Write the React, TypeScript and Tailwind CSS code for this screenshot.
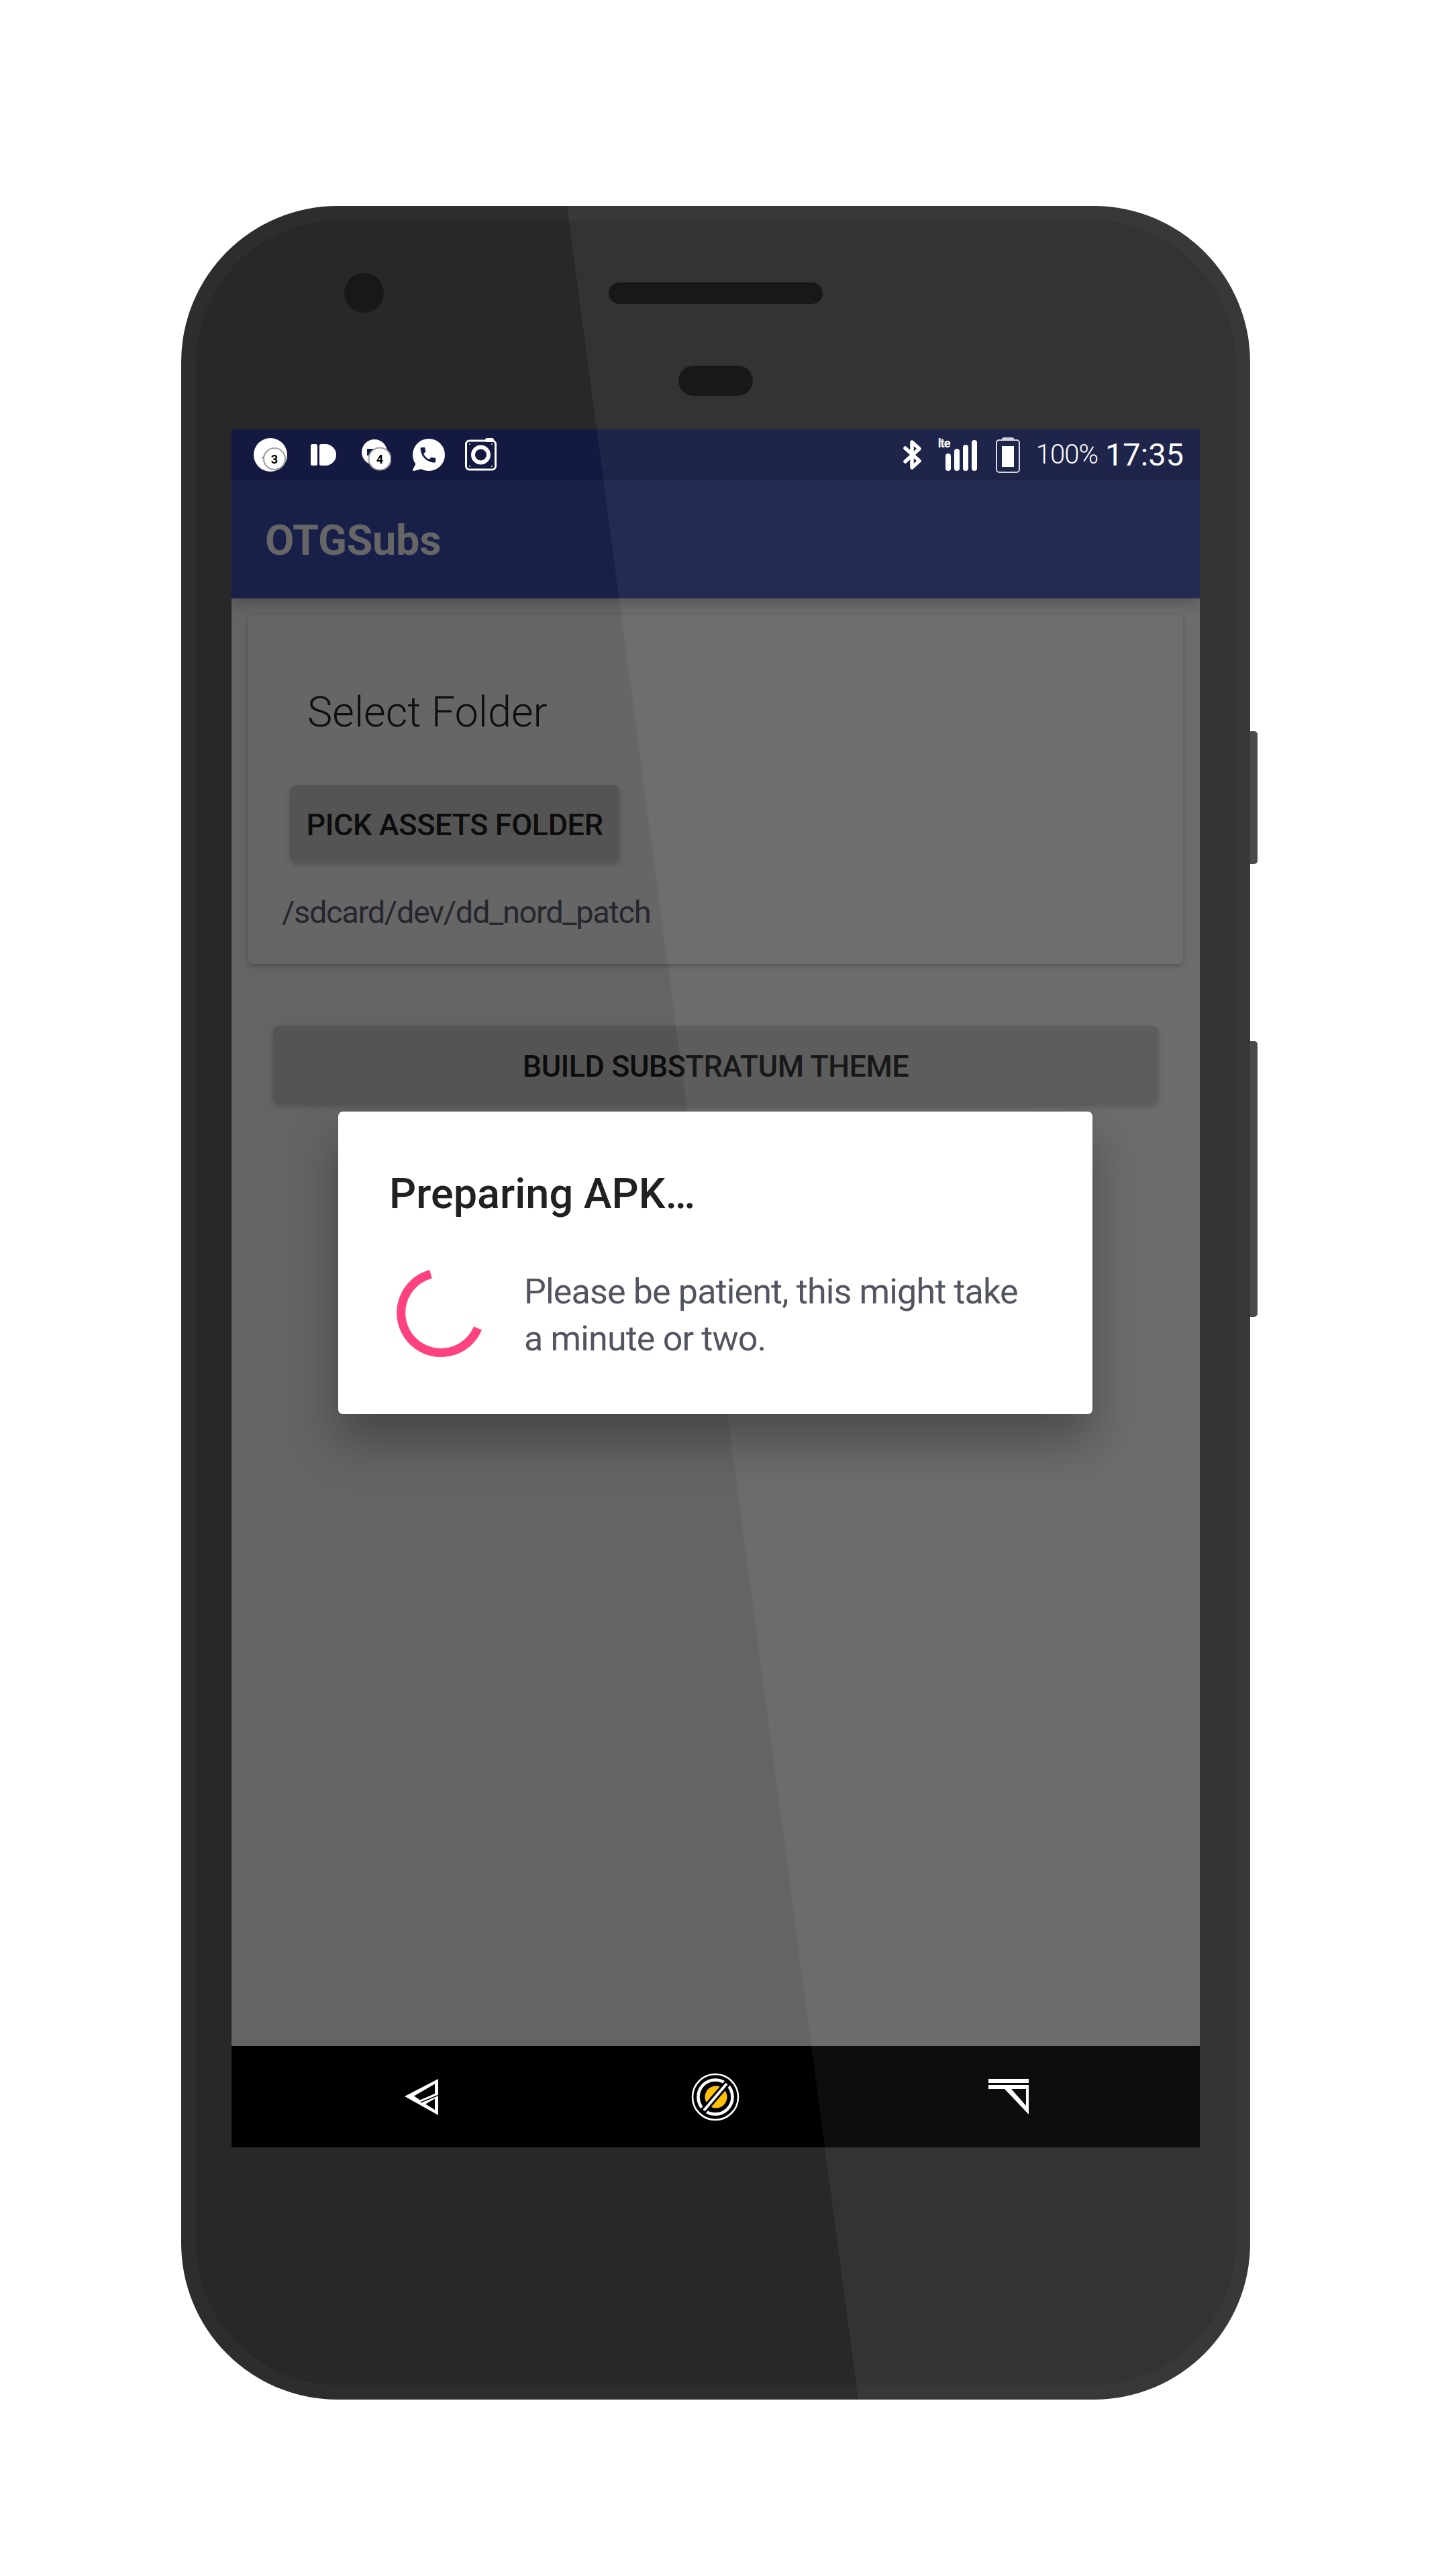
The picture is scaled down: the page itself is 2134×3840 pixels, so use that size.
import React from "react";

const STATUS_BG = "#131940";

function BadgeIcon({ n, w, cx, cy, r, bx, by, br, hole, tail }: { n: string; w: number; cx: number; cy: number; r: number; bx: number; by: number; br: number; hole: string; tail?: string }) {
  return (
    <svg width={w} height={50} viewBox={`0 0 ${w} 50`} className="shrink-0">
      <circle cx={cx} cy={cy} r={r} fill="#fff" />
      {tail && <polygon points={tail} fill="#fff" />}
      <polygon points={hole} fill={STATUS_BG} />
      <circle cx={bx} cy={by} r={br} fill="#fff" stroke="#a3a3a3" strokeWidth={2.2} />
      <text x={bx} y={by + 6.5} textAnchor="middle" fontSize={18} fontWeight={700} fill="#000" fontFamily="Roboto, sans-serif">
        {n}
      </text>
    </svg>
  );
}

function PushIcon() {
  return (
    <svg width={38} height={32} viewBox="0 0 38 32" className="shrink-0">
      <rect x={0} y={0} width={10} height={32} rx={2.5} fill="#fff" />
      <path d="M13 2.5a2.5 2.5 0 0 1 2.5-2.5H22a16 16 0 0 1 0 32h-6.5a2.5 2.5 0 0 1-2.5-2.5z" fill="#fff" />
    </svg>
  );
}

function WhatsIcon() {
  return (
    <svg width={49} height={50} viewBox="0 0 49 50" className="shrink-0">
      <circle cx={25} cy={25} r={24} fill="#fff" />
      <path d="M8 34 L1 47 Q0.5 49 3 49 L18 45 Z" fill="#fff" />
      <g transform="translate(9.5 9.5) scale(1.25)">
        <path
          d="M6.62 10.79c1.44 2.83 3.76 5.14 6.59 6.59l2.2-2.2c.27-.27.67-.36 1.02-.24 1.12.37 2.33.57 3.57.57.55 0 1 .45 1 1V20c0 .55-.45 1-1 1-9.39 0-17-7.61-17-17 0-.55.45-1 1-1h3.5c.55 0 1 .45 1 1 0 1.25.2 2.45.57 3.57.11.35.03.74-.25 1.02l-2.2 2.2z"
          fill={STATUS_BG}
          transform="translate(-0.5 0.5)"
        />
      </g>
    </svg>
  );
}

function InstaIcon() {
  return (
    <svg width={47} height={50} viewBox="0 0 47 50" className="shrink-0">
      <rect x={1.5} y={4} width={44} height={43} rx={5} fill="none" stroke="#fff" strokeWidth={3} />
      <rect x={30} y={0} width={13} height={6} rx={3} fill="#fff" />
      <circle cx={23.5} cy={25} r={11.5} fill="none" stroke="#fff" strokeWidth={6} />
      <circle cx={7} cy={9} r={0.9} fill="#fff" />
      <circle cx={40} cy={9} r={0.9} fill="#fff" />
      <circle cx={7} cy={42} r={0.9} fill="#fff" />
      <circle cx={40} cy={42} r={0.9} fill="#fff" />
    </svg>
  );
}

function Bluetooth() {
  return (
    <svg width={28} height={44} viewBox="0 0 28 44" className="shrink-0">
      <path
        d="M3 12 L24 31 L13 41 V3 L24 13 L3 32"
        fill="none"
        stroke="#fff"
        strokeWidth={5.5}
        strokeLinecap="round"
        strokeLinejoin="round"
      />
    </svg>
  );
}

function Signal() {
  return (
    <div className="relative flex h-[47px] w-[59px] shrink-0 items-end gap-[5px] pl-[11px]">
      <span className="absolute left-0 top-[-4px] font-['Roboto'] text-[18px] leading-[20px] font-bold tracking-[-1px] text-white">lte</span>
      <div className="h-[26px] w-[8px] rounded-full bg-white" />
      <div className="h-[33px] w-[8px] rounded-full bg-white" />
      <div className="h-[39px] w-[8px] rounded-full bg-white" />
      <div className="h-[46px] w-[8px] rounded-full bg-white" />
    </div>
  );
}

function Battery() {
  return (
    <svg width={36} height={53} viewBox="0 0 36 53" className="shrink-0">
      <rect x={9} y={0} width={18} height={5} rx={2.5} fill="#c9cbd6" />
      <rect x={1} y={4} width={34} height={48} rx={4} fill="none" stroke="#d8d9e0" strokeWidth={2} />
      <rect x={9} y={13} width={18} height={31} fill="#fff" />
    </svg>
  );
}

function BackIcon() {
  return (
    <svg width={50} height={54} viewBox="13 18 50 54">
      <path
        fillRule="evenodd"
        d="M13 44 L63 18 V72 Z M27 43.5 L36 49.5 L58 40 V25.5 Z M44 55.5 L58 64 V47.5 Z"
        fill="#fff"
      />
      <path d="M37 53 L63 42.5" stroke="#000" strokeWidth={1.6} />
    </svg>
  );
}

function HomeIcon() {
  return (
    <svg width={72} height={72} viewBox="0 0 72 72">
      <circle cx={36} cy={36} r={34} fill="none" stroke="#fff" strokeWidth={2.6} />
      <circle cx={36} cy={36} r={25.5} fill="none" stroke="#fff" strokeWidth={4.6} />
      <circle cx={37} cy={36} r={16.5} fill="#ffc107" />
      <path d="M17 58 L55 14" stroke="#000" strokeWidth={10} />
      <path d="M19 56 L53 16" stroke="#fff" strokeWidth={4} />
    </svg>
  );
}

function RecentsIcon() {
  return (
    <svg width={60} height={53} viewBox="0 0 60 53">
      <rect x={0} y={0} width={60} height={6} fill="#fff" />
      <rect x={0} y={9} width={60} height={6} fill="#fff" />
      <path fillRule="evenodd" d="M24 15 H60 V53 Z M34 15 L56 40 V15 Z" fill="#fff" />
    </svg>
  );
}

function Spinner() {
  return (
    <svg width={132} height={132} viewBox="0 0 132 132" className="shrink-0">
      <path d="M51 8.4 A59.5 59.5 0 1 0 121 89" fill="none" stroke="#ff4081" strokeWidth={13} />
    </svg>
  );
}

export default function App() {
  return (
    <div className="relative h-[3840px] w-[2134px] overflow-hidden bg-white pl-[270px] pt-[307px] font-['Roboto',sans-serif]">
      {/* side buttons */}
      <div className="absolute left-[1863px] top-[1090px] h-[198px] w-[11px] rounded-r-[5px] bg-[#4a4a4a]" />
      <div className="absolute left-[1863px] top-[1552px] h-[411px] w-[11px] rounded-r-[5px] bg-[#4a4a4a]" />

      {/* phone */}
      <div className="relative h-[3270px] w-[1593px] overflow-hidden rounded-[233px] bg-[#2d2d2d] p-[22px]">
        <div className="flex h-full flex-col rounded-[212px] bg-[#282828] px-[53px]">
          {/* top bezel */}
          <div className="relative flex h-[311px] shrink-0 flex-col items-center">
            <div className="absolute left-[168px] top-[78px] h-[59px] w-[59px] rounded-full bg-[#181818]" />
            <div className="relative z-20 mt-[92px] h-[32px] w-[319px] rounded-full bg-[#181818]" />
            <div className="relative z-20 mt-[92px] h-[45px] w-[111px] rounded-full bg-[#181818]" />
          </div>

          {/* screen */}
          <div className="relative flex h-[2561px] shrink-0 flex-col overflow-hidden">
            <div className="flex h-[76px] shrink-0 items-center justify-between pl-[33px] pr-[24px]" style={{ background: STATUS_BG }}>
              <div className="flex items-center">
                <BadgeIcon n="3" w={50} cx={25} cy={25} r={25} bx={31} by={31} br={16} hole="12,30 20,22 21,32" />
                <div className="ml-[35px]"><PushIcon /></div>
                <div className="ml-[38px]">
                  <BadgeIcon n="4" w={44} cx={19} cy={21} r={19} bx={27} by={31} br={16.5} hole="8,16 19,16 17,26 8,26" tail="19,40 27,40 22,48" />
                </div>
                <div className="ml-[31px]"><WhatsIcon /></div>
                <div className="ml-[30px]"><InstaIcon /></div>
              </div>
              <div className="flex items-center text-white">
                <Bluetooth />
                <div className="ml-[24px]"><Signal /></div>
                <div className="ml-[27px]"><Battery /></div>
                <span className="ml-[24px] text-[40px] leading-[50px] font-light tracking-[-1px]">100%</span>
                <span className="ml-[11px] text-[47px] leading-[50px]">17:35</span>
              </div>
            </div>

            <div className="z-[1] flex h-[176px] shrink-0 items-center bg-[#182049] pl-[50px] pt-[4px] shadow-[0_6px_20px_rgba(0,0,0,0.25)]">
              <span className="text-[63px] leading-[72px] font-bold tracking-[-0.3px] text-[#666666]">OTGSubs</span>
            </div>

            <div className="flex min-h-0 flex-1 flex-col bg-[#646464] px-[25px] pt-[25px]">
              <div className="flex h-[520px] shrink-0 flex-col items-start rounded-[7px] bg-[#666666] shadow-[0_3px_7px_rgba(0,0,0,0.22)]">
                <div className="ml-[88px] mt-[108px] text-[63px] leading-[74px] font-light text-[#0e0e0e]">Select Folder</div>
                <div className="ml-[62px] mt-[71px] flex h-[115px] w-[491px] items-center justify-center rounded-[10px] bg-[#545454] pt-[5px] text-[45px] font-medium tracking-[-0.4px] text-[#0c0c0c] shadow-[0_4px_8px_rgba(0,0,0,0.2)]">
                  PICK ASSETS FOLDER
                </div>
                <div className="ml-[50px] mt-[46px] text-[47px] leading-[58px] tracking-[-1.35px] text-[#25272d]">/sdcard/dev/dd_nord_patch</div>
              </div>
              <div className="mx-[37px] mt-[92px] flex h-[116px] shrink-0 items-center justify-center rounded-[10px] bg-[#545454] pt-[5px] text-[45px] font-medium tracking-[-0.5px] text-[#0c0c0c] shadow-[0_4px_8px_rgba(0,0,0,0.2)]">
                BUILD SUBSTRATUM THEME
              </div>
            </div>

            <div className="flex h-[151px] shrink-0 items-center bg-black">
              <div className="ml-[258px]"><BackIcon /></div>
              <div className="ml-[377px]"><HomeIcon /></div>
              <div className="ml-[371px]"><RecentsIcon /></div>
            </div>

            {/* dialog */}
            <div className="absolute left-[159px] top-[1017px] z-20 h-[451px] w-[1124px] rounded-[7px] bg-white pl-[76px] pt-[86px] shadow-[0_40px_70px_rgba(0,0,0,0.3)]">
              <div className="text-[63px] leading-[74px] font-medium text-[#212121]">Preparing APK…</div>
              <div className="ml-[11px] mt-[74px] flex">
                <div className="mt-[0px]"><Spinner /></div>
                <div className="ml-[58px] w-[800px] text-[52px] leading-[70px] tracking-[-0.85px] text-[#52555f]">
                  Please be patient, this might take
                  <br />a minute or two.
                </div>
              </div>
            </div>
          </div>
        </div>

        {/* sheen */}
        <div className="pointer-events-none absolute inset-0 z-10 bg-white/5 [clip-path:polygon(575px_0,100%_0,100%_100%,1009px_100%)]" />
      </div>
    </div>
  );
}
